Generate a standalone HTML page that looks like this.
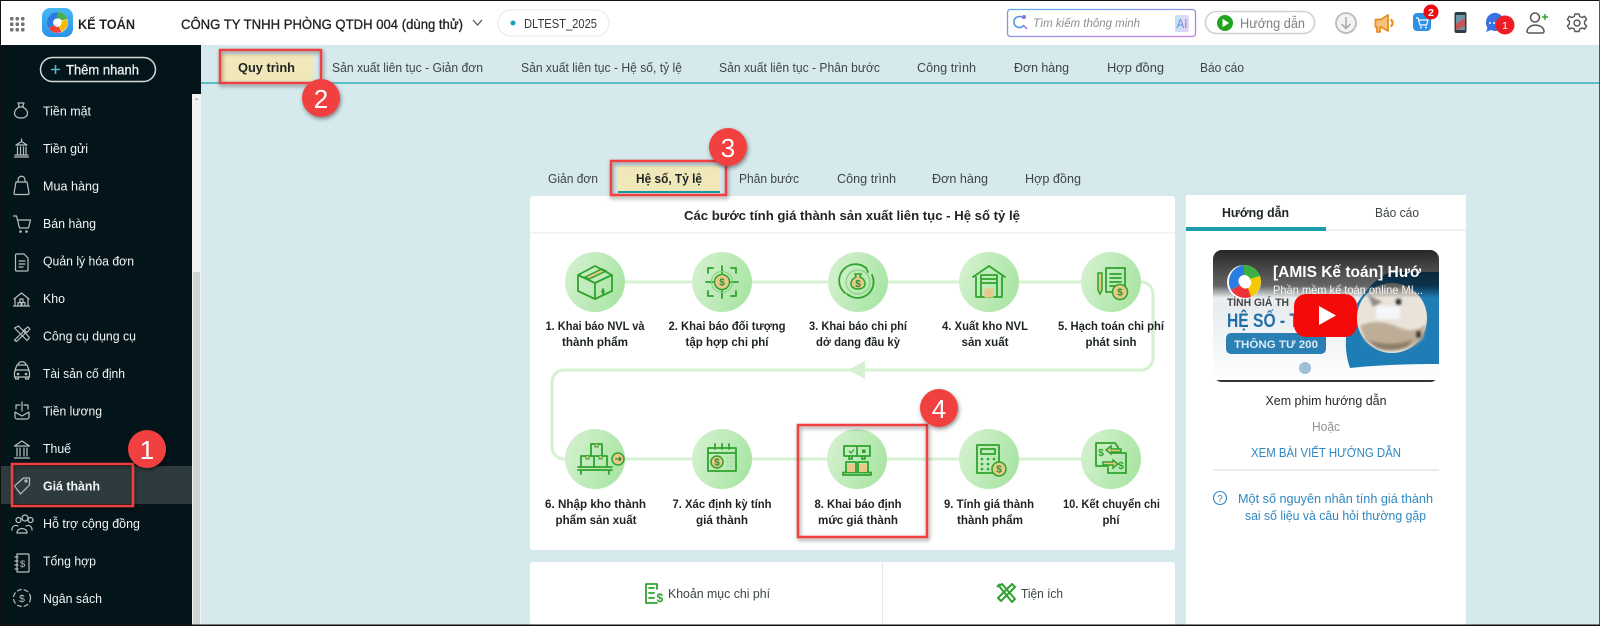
<!DOCTYPE html>
<html lang="vi"><head><meta charset="utf-8"><title>Kế toán</title>
<style>
html,body{margin:0;padding:0;width:1600px;height:626px;overflow:hidden;background:#d6eaed}
svg{display:block;filter:blur(.3px)}
text{font-family:"Liberation Sans","DejaVu Sans",sans-serif}
.s{fill:#f2f5f5;font-size:13px}
.si{fill:none;stroke:#b9c0c1;stroke-width:1.200;stroke-linecap:round;stroke-linejoin:round}
.t{fill:#3d4547;font-size:13px}
.b{fill:#1d2325;font-weight:700;font-size:13px}
.l{fill:#1d2325;font-weight:700;font-size:12px;text-anchor:middle}
.g{fill:none;stroke:#2fa32d;stroke-width:1.800;stroke-linejoin:round;stroke-linecap:round}
.o{fill:#e9c98a;stroke:#2fa32d;stroke-width:1.500}
.d{fill:#2a8f2a;font-size:10px;font-weight:700;text-anchor:middle}
.n{fill:#fff;font-size:26px;text-anchor:middle}
</style></head>
<body>
<svg width="1600" height="626" viewBox="0 0 1600 626" xmlns="http://www.w3.org/2000/svg">
<defs>
<linearGradient id="cg" x1="0" y1="0.2" x2="1" y2="0.6"><stop offset="0" stop-color="#d5f1d0"/><stop offset="1" stop-color="#a9e5a4"/></linearGradient>
<linearGradient id="sb" x1="0" y1="0" x2="1" y2="1"><stop offset="0" stop-color="#5aa9f0"/><stop offset="1" stop-color="#c77be0"/></linearGradient>
<linearGradient id="ai" x1="0" y1="0" x2="1" y2="0"><stop offset="0" stop-color="#bfe3f5"/><stop offset="1" stop-color="#e9d3f5"/></linearGradient>
<linearGradient id="lg" x1="0" y1="0" x2="0" y2="1"><stop offset="0" stop-color="#46b8f2"/><stop offset="1" stop-color="#2a92e8"/></linearGradient>
<linearGradient id="vt" x1="0" y1="0" x2="0" y2="1"><stop offset="0" stop-color="#ffffff"/><stop offset="0.42" stop-color="#e8ecee"/><stop offset="1" stop-color="#ffffff"/></linearGradient>
<linearGradient id="vh" x1="0" y1="0" x2="0" y2="1"><stop offset="0" stop-color="#000" stop-opacity=".85"/><stop offset="0.75" stop-color="#000" stop-opacity=".58"/><stop offset="1" stop-color="#000" stop-opacity="0"/></linearGradient>
<clipPath id="vc"><rect x="1213" y="250" width="226" height="132" rx="9"/></clipPath>
<filter id="sh" x="-20%" y="-20%" width="140%" height="140%"><feDropShadow dx="1" dy="2" stdDeviation="2" flood-color="#000" flood-opacity=".45"/></filter>
<filter id="bl"><feGaussianBlur stdDeviation="1.200"/></filter>
</defs>

<rect width="1600" height="626" fill="#d6eaed"/>

<!-- HEADER -->
<rect width="1600" height="45" fill="#fff"/>
<g fill="#6f7577">
<rect x="10" y="17" width="3.500" height="3.500" rx="1"/><rect x="15.500" y="17" width="3.500" height="3.500" rx="1"/><rect x="21" y="17" width="3.500" height="3.500" rx="1"/>
<rect x="10" y="22.500" width="3.500" height="3.500" rx="1"/><rect x="15.500" y="22.500" width="3.500" height="3.500" rx="1"/><rect x="21" y="22.500" width="3.500" height="3.500" rx="1"/>
<rect x="10" y="28" width="3.500" height="3.500" rx="1"/><rect x="15.500" y="28" width="3.500" height="3.500" rx="1"/><rect x="21" y="28" width="3.500" height="3.500" rx="1"/>
</g>
<rect x="42" y="8" width="31" height="29" rx="8" fill="url(#lg)"/>
<circle cx="57.500" cy="22.500" r="10.500" fill="#fff"/>
<path d="M57.500 12a10.500 10.500 0 0 1 10 7l-6 1.500a4 4 0 0 0-4-2z" fill="#4caf50"/>
<path d="M67.500 19.500a10.500 10.500 0 0 1-6 12l-2-5.500a4 4 0 0 0 2-5z" fill="#f5b800"/>
<path d="M61.500 32a10.500 10.500 0 0 1-13-4l5.500-3a4 4 0 0 0 5 1.500z" fill="#ef4136"/>
<path d="M48.500 28a10.500 10.500 0 0 1 9-16l0 6.500a4 4 0 0 0-3.500 6.500z" fill="#2a7de1"/>
<text x="78" y="29" font-size="14" font-weight="700" fill="#1f2527" textLength="57" lengthAdjust="spacingAndGlyphs">KẾ TOÁN</text>
<text x="181" y="29" font-size="14" fill="#1f2527" stroke="#1f2527" stroke-width=".35" textLength="282" lengthAdjust="spacingAndGlyphs">CÔNG TY TNHH PHÒNG QTDH 004 (dùng thử)</text>
<path d="M473 20l4.500 5 4.500-5" fill="none" stroke="#555" stroke-width="1.300"/>
<rect x="498" y="10" width="111" height="26" rx="13" fill="#fff" stroke="#e4e8e9"/>
<circle cx="513" cy="23" r="2.500" fill="#1aa1b5"/>
<text x="524" y="28" font-size="12.500" fill="#333a3c" textLength="73" lengthAdjust="spacingAndGlyphs">DLTEST_2025</text>

<rect x="1007.500" y="9.500" width="188" height="27" rx="3" fill="#fff" stroke="url(#sb)" stroke-width="1.300"/>
<path d="M1024 19a5.500 5.500 0 1 0 0 6" fill="none" stroke="#4d8de8" stroke-width="1.500"/><path d="M1024 26l3 3" stroke="#a874e0" stroke-width="1.500"/><circle cx="1024" cy="17" r="2" fill="#8d6fe0"/>
<text x="1033" y="27" font-size="12" font-style="italic" fill="#8a9092" textLength="107" lengthAdjust="spacingAndGlyphs">Tìm kiếm thông minh</text>
<rect x="1175" y="15" width="14" height="17" rx="2" fill="url(#ai)"/>
<text x="1176.500" y="28" font-size="13" fill="#6f8fd8" textLength="11" lengthAdjust="spacingAndGlyphs">AI</text>

<rect x="1205.500" y="11.500" width="109" height="22" rx="11" fill="#fff" stroke="#cfd2d3" stroke-width="1.600"/>
<circle cx="1225" cy="23" r="8" fill="#22a41d"/><path d="M1222.500 18.800l6.500 4.200-6.500 4.200z" fill="#fff"/>
<text x="1240" y="28" font-size="13.500" fill="#7c8284" textLength="65" lengthAdjust="spacingAndGlyphs">Hướng dẫn</text>

<circle cx="1346" cy="23" r="10" fill="#f2f2f2" stroke="#b9bcbd" stroke-width="1.800"/>
<path d="M1346 17v11M1341.500 24l4.500 4.500 4.500-4.500" fill="none" stroke="#a5a9aa" stroke-width="1.500"/>

<path d="M1375.500 19.500h5.500l7-4.500v16l-7-4h-1v5h-3v-5h-1.500z" fill="#f6c27f" stroke="#ea8e1f" stroke-width="1.800" stroke-linejoin="round"/>
<path d="M1390.500 19.500a4 4 0 0 1 0 7" fill="none" stroke="#ea8e1f" stroke-width="2.200"/>

<rect x="1413" y="13" width="18" height="18" rx="4" fill="#2f8fe6"/>
<path d="M1416 18h2l2 7h6.500l1.500-5h-9" fill="none" stroke="#fff" stroke-width="1.200"/><circle cx="1421" cy="27.500" r="1" fill="#fff"/><circle cx="1426" cy="27.500" r="1" fill="#fff"/>
<circle cx="1431" cy="12" r="7.500" fill="#ee0b12"/><text x="1431" y="16" font-size="10.500" font-weight="700" fill="#fff" text-anchor="middle">2</text>

<rect x="1454.500" y="12" width="12" height="21" rx="2" fill="#2e3d45"/><rect x="1456" y="15" width="9" height="15" fill="#6d95a3"/><path d="M1456 24l9-6v8l-9 4z" fill="#c8555a"/>

<path d="M1486 22a9 9 0 1 1 5 8l-5 2 1.500-4a9 9 0 0 1-1.500-6z" fill="#3a72e0"/>
<circle cx="1490" cy="23" r="1" fill="#fff"/><circle cx="1494" cy="23" r="1" fill="#fff"/>
<circle cx="1505" cy="25" r="9.500" fill="#ee1c25"/><text x="1505" y="29" font-size="10.500" fill="#fff" text-anchor="middle">1</text>

<circle cx="1535" cy="17.500" r="4.500" fill="none" stroke="#555" stroke-width="1.500"/>
<path d="M1527 32c0-9 16-9 17-1 0 2-1 2-2 2h-13c-1 0-2-1-2-1z" fill="none" stroke="#555" stroke-width="1.500"/>
<path d="M1542 17h6M1545 14v6" stroke="#2ea52c" stroke-width="1.500"/>

<circle cx="1577" cy="23" r="3" fill="none" stroke="#555" stroke-width="1.400"/>
<path d="M1575 14h4l.8 2.500 2.500 1 2.300-1.200 2 3.200-2 1.800v2.800l2 1.800-2 3.200-2.300-1.200-2.500 1-.8 2.600h-4l-.8-2.600-2.500-1-2.300 1.200-2-3.200 2-1.800v-2.800l-2-1.800 2-3.200 2.300 1.200 2.500-1z" fill="none" stroke="#555" stroke-width="1.400" stroke-linejoin="round"/>

<!-- SIDEBAR -->
<rect x="0" y="45" width="201" height="581" fill="#03151a"/>
<rect x="192" y="94" width="9" height="532" fill="#f1f2f2"/>
<rect x="193" y="272" width="7" height="354" fill="#cdd2d6"/>
<path d="M194.500 100l2-2.500 2 2.500z" fill="#b5b8ba"/>
<rect x="40.500" y="57.500" width="115" height="24" rx="12" fill="none" stroke="#d5d9da" stroke-width="1.500"/>
<path d="M51 69.500h9M55.500 65v9" stroke="#55b7c4" stroke-width="1.600"/>
<text x="66" y="74.500" font-size="13.500" fill="#e9eeee" stroke="#e9eeee" stroke-width=".3" textLength="73" lengthAdjust="spacingAndGlyphs">Thêm nhanh</text>

<rect x="0" y="466" width="192" height="38" fill="#2e3b3e"/>

<g class="s">
<text x="43" y="115.500" textLength="48" lengthAdjust="spacingAndGlyphs">Tiền mặt</text>
<text x="43" y="153" textLength="45" lengthAdjust="spacingAndGlyphs">Tiền gửi</text>
<text x="43" y="190.500" textLength="56" lengthAdjust="spacingAndGlyphs">Mua hàng</text>
<text x="43" y="228" textLength="53" lengthAdjust="spacingAndGlyphs">Bán hàng</text>
<text x="43" y="265.500" textLength="91" lengthAdjust="spacingAndGlyphs">Quản lý hóa đơn</text>
<text x="43" y="303" textLength="22" lengthAdjust="spacingAndGlyphs">Kho</text>
<text x="43" y="340.500" textLength="93" lengthAdjust="spacingAndGlyphs">Công cụ dụng cụ</text>
<text x="43" y="378" textLength="82" lengthAdjust="spacingAndGlyphs">Tài sản cố định</text>
<text x="43" y="415.500" textLength="59" lengthAdjust="spacingAndGlyphs">Tiền lương</text>
<text x="43" y="453" textLength="28" lengthAdjust="spacingAndGlyphs">Thuế</text>
<text x="43" y="490.500" font-weight="700" textLength="57" lengthAdjust="spacingAndGlyphs">Giá thành</text>
<text x="43" y="528" textLength="97" lengthAdjust="spacingAndGlyphs">Hỗ trợ cộng đồng</text>
<text x="43" y="565.500" textLength="53" lengthAdjust="spacingAndGlyphs">Tổng hợp</text>
<text x="43" y="603" textLength="59" lengthAdjust="spacingAndGlyphs">Ngân sách</text>
</g>
<g class="si">
<path d="M18 103h6l-1.500 4c3.500 1.500 5 4 5 6.500 0 2.500-2.500 4.500-6 4.500h-1c-3.500 0-6-2-6-4.500 0-2.500 1.500-5 5-6.500zM18.500 107h5"/>
<path d="M15 155h13M16 145h11l-5.500-3.500zM17.500 147v7M20.500 147v7M23.500 147v7M26 147v7M14.500 157h14M21.500 139v2"/>
<path d="M16 182h11l2 11c0 1-.5 1.500-1.500 1.500h-12c-1 0-1.500-.5-1.500-1.500zM18 182v-2c0-5 7-5 7 0v2"/>
<path d="M13.500 216h3l3 12h9l2-8H17.500"/><circle cx="20.500" cy="231.500" r=".7"/><circle cx="26.500" cy="231.500" r=".7"/>
<path d="M17 254h7l4 4v12c0 1-.5 1-1 1H17c-1 0-1.500-.5-1.500-1v-15c0-.5.500-1 1.500-1zM19 261h6M19 264h6M19 267h4"/>
<path d="M14 299l7.500-6 7.500 6M15 299v6M28 299v6M13.500 306h16M18 306v-3.500h3v3.500M22 306v-3.500h3v3.500M20 302.500v-3.500h3v3.500"/>
<path d="M14.500 328l4-2 11 11.500-2.500 3zM28 327l2 2-3 3.500-3-2.500zM24 331l-9.500 9 2 1.500 9.500-9"/>
<path d="M15 370h14l-2-5H17zM14.500 377v-5l1.500-2h12l1.500 2v5zM15.500 377v2h3v-2M25.500 377v2h3v-2M18 364c2-3 6-3 8 0"/><circle cx="18" cy="374" r=".7"/><circle cx="26" cy="374" r=".7"/>
<path d="M16 409v-4h4M28 409v-4h-4M15 412l7 4 7-4v5c0 1-1 2-2 2H17c-1 0-2-1-2-2zM22 402v9"/>
<path d="M14.500 446h15l-7.500-5zM17 448v8M20 448v8M24 448v8M27 448v8M14.500 458h15"/>
<path d="M14.500 486l9-8h6v7l-9 9z"/><circle cx="26" cy="481" r="1"/>
<path d="M16 520a2.500 2.500 0 1 1 0 .1M28 520a2.500 2.500 0 1 1 0 .1M22 518a3 3 0 1 1 0 .1M12 530c0-5 4-5 6-4M32 530c0-5-4-5-6-4M17 533c0-6 10-6 10 0z"/>
<path d="M17 554h11c.5 0 1 .5 1 1v16c0 .5-.5 1-1 1H17zM15 557h3M15 561h3M15 565h3M15 569h3"/><text x="20" y="567" font-size="9.500" fill="#b9c0c1" stroke="none">$</text>
<circle cx="22" cy="598" r="8.500" stroke-dasharray="4 3"/><text x="19" y="602" font-size="10.500" fill="#b9c0c1" stroke="none">$</text>
</g>

<!-- TOP TABS -->
<rect x="201" y="82" width="1399" height="2" fill="#5dbdc6"/>
<rect x="222" y="54" width="92" height="27" fill="#f1e8b9"/>
<text x="238" y="72" class="b" textLength="57" lengthAdjust="spacingAndGlyphs">Quy trình</text>
<g class="t">
<text x="332" y="72" textLength="151" lengthAdjust="spacingAndGlyphs">Sản xuất liên tục - Giản đơn</text>
<text x="521" y="72" textLength="161" lengthAdjust="spacingAndGlyphs">Sản xuất liên tục - Hệ số, tỷ lệ</text>
<text x="719" y="72" textLength="161" lengthAdjust="spacingAndGlyphs">Sản xuất liên tục - Phân bước</text>
<text x="917" y="72" textLength="59" lengthAdjust="spacingAndGlyphs">Công trình</text>
<text x="1014" y="72" textLength="55" lengthAdjust="spacingAndGlyphs">Đơn hàng</text>
<text x="1107" y="72" textLength="57" lengthAdjust="spacingAndGlyphs">Hợp đồng</text>
<text x="1200" y="72" textLength="44" lengthAdjust="spacingAndGlyphs">Báo cáo</text>
</g>

<!-- SUB TABS -->
<rect x="618" y="166" width="102" height="26" fill="#f1e8b9"/>
<rect x="618" y="191" width="102" height="2" fill="#1a9aa5"/>
<text x="636" y="183" class="b" textLength="66" lengthAdjust="spacingAndGlyphs">Hệ số, Tỷ lệ</text>
<g class="t">
<text x="548" y="183" textLength="50" lengthAdjust="spacingAndGlyphs">Giản đơn</text>
<text x="739" y="183" textLength="60" lengthAdjust="spacingAndGlyphs">Phân bước</text>
<text x="837" y="183" textLength="59" lengthAdjust="spacingAndGlyphs">Công trình</text>
<text x="932" y="183" textLength="56" lengthAdjust="spacingAndGlyphs">Đơn hàng</text>
<text x="1025" y="183" textLength="56" lengthAdjust="spacingAndGlyphs">Hợp đồng</text>
</g>

<!-- MAIN CARD -->
<rect x="530" y="196" width="645" height="354" rx="3" fill="#fff"/>
<rect x="530" y="232" width="645" height="1.500" fill="#f0f1f1"/>
<text x="684" y="220" class="b" textLength="336" lengthAdjust="spacingAndGlyphs">Các bước tính giá thành sản xuất liên tục - Hệ số tỷ lệ</text>

<path d="M595 282H1141a12 12 0 0 1 12 12V358a12 12 0 0 1-12 12H564a12 12 0 0 0-12 12v65a12 12 0 0 0 12 12H1111" fill="none" stroke="#d5f1d1" stroke-width="3"/>
<path d="M848 370l17-9v18z" fill="#d5f1d1"/>

<g fill="url(#cg)">
<circle cx="595" cy="282" r="30"/><circle cx="722" cy="282" r="30"/><circle cx="858" cy="282" r="30"/><circle cx="989" cy="282" r="30"/><circle cx="1111" cy="282" r="30"/>
<circle cx="595" cy="459" r="30"/><circle cx="722" cy="459" r="30"/><circle cx="857" cy="459" r="30"/><circle cx="989" cy="459" r="30"/><circle cx="1111" cy="459" r="30"/>
</g>

<!-- 1 box -->
<g transform="translate(595 282)">
<path class="o" d="M-10-5l17-8 4 2-17 8z"/>
<path class="g" d="M-17-7L0-16l17 9V9L0 17-17 9zM-17-7L0 1 17-7M0 1V17"/><path class="g" d="M8 7l-1 3 2-1-1 3" stroke-width="1.300"/>
</g>
<!-- 2 target -->
<g transform="translate(722 282)">
<path class="g" d="M-14-9v-5h5M9-14h5v5M14 9v5H9M-9 14h-5V9M-16 0h7M9 0h7M0-16v7M0 9v7"/>
<circle r="7.500" fill="#e9c98a" stroke="#2fa32d" stroke-width="1.500"/><circle r="10.500" fill="none" stroke="#7fcf79" stroke-width="1"/>
<text y="3.500" class="d">$</text>
</g>
<!-- 3 bag -->
<g transform="translate(858 282)">
<path class="g" d="M-13 11A16 16 0 0 1 8-14M14-7A16 16 0 0 1-8 14M8-14l2 4M-8 14l-3-2"/>
<circle r="12" fill="none" stroke="#7fcf79"/>
<path class="o" d="M-3-8h6l-1 3c4 2 5 4 5 7 0 3-3 5-7 5s-7-2-7-5c0-3 1-5 5-7z"/>
<text y="5" class="d">$</text>
</g>
<!-- 4 warehouse -->
<g transform="translate(989 282)">
<path class="g" d="M-16-5L0-16 16-5M-13-5V15H13V-5M-8 15V-7H8V15M-8-3H8M-8 1H8"/>
<rect x="-4" y="7" width="8" height="8" fill="#e9c98a" stroke="#e9c98a"/>
</g>
<!-- 5 doc -->
<g transform="translate(1111 282)">
<path class="g" d="M-5-14H14V4M-5-14V10H2M-1-8H10M-1-4H10M-1 0H10M-1 4H4"/>
<path class="o" d="M-13-9h4V8l-2 4-2-4z"/>
<circle cx="9" cy="10" r="7.500" class="o"/><text x="9" y="13.500" class="d">$</text>
</g>
<!-- 6 boxes -->
<g transform="translate(595 459)">
<path class="g" d="M-14-3H-1V8H-14zM-1-3H12V8H-1zM-4-15H7V-3H-4zM-17 8H17M-17 11H17M-14 11v4M14 11v4"/>
<path d="M-9-3v3h3v-3M4-3v3h3v-3M0-15v3h3v-3" fill="#e9c98a" stroke="#2fa32d"/>
<circle cx="23" cy="0" r="6" class="o"/><path d="M20 0h6M24-2l2 2-2 2" fill="none" stroke="#2a8f2a" stroke-width="1.300"/>
</g>
<!-- 7 calendar -->
<g transform="translate(722 459)">
<path class="g" d="M-14-11H14V12H-14zM-14-6H14M-7-15v5M0-15v5M7-15v5"/>
<circle cx="-5" cy="3" r="6" class="o"/><text x="-5" y="6.500" class="d">$</text>
<path d="M5-1h7M5 3h7M5 7h7" stroke="#9ad596" stroke-width="1.500" stroke-dasharray="1.500 1.500"/>
</g>
<!-- 8 shelves -->
<g transform="translate(857 459)">
<path class="g" d="M-13-13H13V-3H-13zM0-13V-3M-8-3v3h3v-3M5-3v3h3v-3M-11 3H-1V13H-11zM1 3H11V13H1zM-14 13.500H14V16H-14z"/>
<rect x="-10" y="5" width="8" height="8" fill="#e9c98a"/><rect x="2" y="5" width="8" height="8" fill="#e9c98a"/>
<path d="M-8-8l2 2 3-3.500" fill="none" stroke="#2fa32d" stroke-width="1.300"/><rect x="5" y="-9.500" width="3.500" height="3.500" fill="#2fa32d"/>
</g>
<!-- 9 calc -->
<g transform="translate(989 459)">
<path class="g" d="M-12-14H10V14H-12zM-8-10H6V-5H-8z"/>
<g fill="#2fa32d"><circle cx="-7" cy="0" r="1.300"/><circle cx="-1" cy="0" r="1.300"/><circle cx="5" cy="0" r="1.300"/><circle cx="-7" cy="5" r="1.300"/><circle cx="-1" cy="5" r="1.300"/><circle cx="-7" cy="10" r="1.300"/><circle cx="-1" cy="10" r="1.300"/></g>
<circle cx="10" cy="10" r="7" class="o"/><text x="10" y="13.500" class="d">$</text>
</g>
<!-- 10 transfer -->
<g transform="translate(1111 459)">
<path class="g" d="M-15-16H4l3 4v6M-15-16V7H-3M0-6H15V14H-3V9"/>
<text x="-10" y="-3" class="d" font-size="11" style="fill:#2fa32d">$</text>
<text x="10" y="10" class="d" font-size="11" style="fill:#2fa32d">$</text>
<path class="o" d="M10-10H0v-3l-5 4 5 4v-2H10zM-8 3H2V1l5 4-5 4V6H-8z" stroke-width="1"/>
</g>

<g class="l">
<text x="595" y="330" textLength="99" lengthAdjust="spacingAndGlyphs">1. Khai báo NVL và</text><text x="595" y="346" textLength="66" lengthAdjust="spacingAndGlyphs">thành phẩm</text>
<text x="727" y="330" textLength="117" lengthAdjust="spacingAndGlyphs">2. Khai báo đối tượng</text><text x="727" y="346" textLength="83" lengthAdjust="spacingAndGlyphs">tập hợp chi phí</text>
<text x="858" y="330" textLength="98" lengthAdjust="spacingAndGlyphs">3. Khai báo chi phí</text><text x="858" y="346" textLength="84" lengthAdjust="spacingAndGlyphs">dở dang đầu kỳ</text>
<text x="985" y="330" textLength="86" lengthAdjust="spacingAndGlyphs">4. Xuất kho NVL</text><text x="985" y="346" textLength="47" lengthAdjust="spacingAndGlyphs">sản xuất</text>
<text x="1111" y="330" textLength="106" lengthAdjust="spacingAndGlyphs">5. Hạch toán chi phí</text><text x="1111" y="346" textLength="51" lengthAdjust="spacingAndGlyphs">phát sinh</text>
<text x="595.500" y="508" textLength="101" lengthAdjust="spacingAndGlyphs">6. Nhập kho thành</text><text x="596" y="524" textLength="81" lengthAdjust="spacingAndGlyphs">phẩm sản xuất</text>
<text x="722" y="508" textLength="99" lengthAdjust="spacingAndGlyphs">7. Xác định kỳ tính</text><text x="722" y="524" textLength="52" lengthAdjust="spacingAndGlyphs">giá thành</text>
<text x="858" y="508" textLength="87" lengthAdjust="spacingAndGlyphs">8. Khai báo định</text><text x="858" y="524" textLength="80" lengthAdjust="spacingAndGlyphs">mức giá thành</text>
<text x="989" y="508" textLength="90" lengthAdjust="spacingAndGlyphs">9. Tính giá thành</text><text x="990" y="524" textLength="66" lengthAdjust="spacingAndGlyphs">thành phẩm</text>
<text x="1111.500" y="508" textLength="97" lengthAdjust="spacingAndGlyphs">10. Kết chuyển chi</text><text x="1111" y="524" textLength="17" lengthAdjust="spacingAndGlyphs">phí</text>
</g>

<!-- BOTTOM CARD -->
<rect x="530" y="562" width="645" height="64" rx="3" fill="#fff"/>
<rect x="882" y="562" width="1" height="64" fill="#e4e6e6"/>
<path class="g" d="M657 589v-5H646v19h11M649 588h5M649 593h5M649 598h5" stroke-width="1.600"/>
<text x="656.500" y="602" font-size="12" font-weight="700" fill="#2fa32d">$</text>
<text x="668" y="598" class="t" textLength="102" lengthAdjust="spacingAndGlyphs">Khoản mục chi phí</text>
<path d="M999 586l3-2 13 15-3 3zM1012 584l3 3-14 14-3-3zM1000 584l-3 3" fill="none" stroke="#2fa32d" stroke-width="2" stroke-linejoin="round"/>
<text x="1021" y="598" class="t" textLength="42" lengthAdjust="spacingAndGlyphs">Tiện ích</text>

<!-- RIGHT PANEL -->
<rect x="1186" y="195" width="280" height="431" fill="#fff"/>
<rect x="1186" y="229" width="280" height="2" fill="#f0f1f1"/>
<rect x="1186" y="227" width="140" height="4" fill="#1a9cac"/>
<text x="1222" y="217" class="b" textLength="67" lengthAdjust="spacingAndGlyphs">Hướng dẫn</text>
<text x="1375" y="217" class="t" textLength="44" lengthAdjust="spacingAndGlyphs">Báo cáo</text>

<g clip-path="url(#vc)">
<rect x="1213" y="250" width="226" height="132" fill="url(#vt)"/>
<path d="M1350 368c-8-22-4-48 8-66 8-12 18-24 32-30h60v92c-30 0-62 0-100 4z" fill="#1f7db5"/>
<circle cx="1392" cy="318" r="35" fill="#e9e3d9"/>
<g filter="url(#bl)">
<path d="M1360 326c14-7 28-4 40 2 10 4 20 2 26-4l-3 14c-14 16-42 16-58 2z" fill="#bfae97"/>
<path d="M1368 340c10 4 34 6 46-2l-6 8c-10 6-26 6-34 0z" fill="#8e7f6a"/>
<rect x="1396" y="299" width="5" height="6" fill="#2a2a2a"/><rect x="1416" y="331" width="5" height="7" fill="#2a2a2a"/>
<path d="M1368 295l14 7-9 5z" fill="#8f8d88"/>
<rect x="1376" y="306" width="24" height="13" fill="#f5f7f9"/>
</g>
<rect x="1213" y="250" width="226" height="48" fill="url(#vh)"/>
<rect x="1213" y="380" width="226" height="2" fill="#333"/>
<text x="1227" y="306" font-size="11" font-weight="700" fill="#444" textLength="62" lengthAdjust="spacingAndGlyphs">TÍNH GIÁ TH</text>
<text x="1227" y="327" font-size="19" font-weight="700" fill="#1f6ea8" textLength="72" lengthAdjust="spacingAndGlyphs">HỆ SỐ - T</text>
<rect x="1226" y="333" width="100" height="21" rx="5" fill="#2a7fb5"/>
<text x="1234" y="348" font-size="11" font-weight="700" fill="#dcebf3" textLength="84" lengthAdjust="spacingAndGlyphs">THÔNG TƯ 200</text>
<circle cx="1305" cy="368" r="6" fill="#9cc0d8"/>
<circle cx="1244" cy="282" r="17" fill="#fff"/>
<path d="M1244 265a17 17 0 0 1 16 11l-10 3a6 6 0 0 0-6-4z" fill="#3cb043"/>
<path d="M1260 276a17 17 0 0 1-9 21l-3-9a6 6 0 0 0 2-9z" fill="#f5c800"/>
<path d="M1251 297a17 17 0 0 1-20-7l9-5a6 6 0 0 0 8 3z" fill="#ee3338"/>
<path d="M1231 290a17 17 0 0 1 13-25v10a6 6 0 0 0-4 10z" fill="#2a7de1"/>
<text x="1273" y="277" font-size="16" font-weight="700" fill="#fff" textLength="148" lengthAdjust="spacingAndGlyphs">[AMIS Kế toán] Hướ</text>
<text x="1273" y="294" font-size="12" fill="#f5f5f5" textLength="150" lengthAdjust="spacingAndGlyphs">Phần mềm kế toán online MI...</text>
</g>
<rect x="1294" y="294" width="63" height="43" rx="12" fill="#f50a0a"/>
<path d="M1319 306l17 9.500-17 9.500z" fill="#fff"/>

<text x="1326" y="405" font-size="13" fill="#22282a" text-anchor="middle" textLength="121" lengthAdjust="spacingAndGlyphs">Xem phim hướng dẫn</text>
<text x="1326" y="431" font-size="12.500" fill="#8c9294" text-anchor="middle" textLength="28" lengthAdjust="spacingAndGlyphs">Hoặc</text>
<text x="1326" y="457" font-size="13" fill="#2f87c0" text-anchor="middle" textLength="150" lengthAdjust="spacingAndGlyphs">XEM BÀI VIẾT HƯỚNG DẪN</text>
<rect x="1213" y="469" width="226" height="2" fill="#ececec"/>
<circle cx="1220" cy="498" r="6.500" fill="none" stroke="#2f87c0" stroke-width="1.100"/>
<text x="1220" y="502" font-size="10" fill="#2f87c0" text-anchor="middle">?</text>
<text x="1238" y="503" font-size="13" fill="#2f87c0" textLength="195" lengthAdjust="spacingAndGlyphs">Một số nguyên nhân tính giá thành</text>
<text x="1245" y="520" font-size="13" fill="#2f87c0" textLength="181" lengthAdjust="spacingAndGlyphs">sai số liệu và câu hỏi thường gặp</text>

<!-- ANNOTATIONS -->
<g fill="none" stroke="#f0413f" stroke-width="2.500" filter="url(#sh)">
<rect x="220" y="50" width="101" height="33"/>
<rect x="611" y="161" width="115" height="34"/>
<rect x="798" y="425" width="129" height="112"/>
<rect x="12" y="464" width="121" height="42"/>
</g>
<g fill="#f0413f" filter="url(#sh)">
<circle cx="147" cy="449" r="19"/><circle cx="321" cy="98" r="19"/><circle cx="728" cy="147" r="19"/><circle cx="939" cy="408" r="19"/>
</g>
<text x="147" y="459" class="n">1</text>
<text x="321" y="108" class="n">2</text>
<text x="728" y="157" class="n">3</text>
<text x="939" y="418" class="n">4</text>

<!-- SCREEN EDGE -->
<rect x="0" y="0" width="1600" height="1" fill="#111"/>
<rect x="0" y="0" width="1" height="626" fill="#111"/>
<rect x="1599" y="0" width="1" height="626" fill="#555"/>
<rect x="0" y="624.500" width="1600" height="1.500" fill="#111"/>
</svg>
</body></html>
